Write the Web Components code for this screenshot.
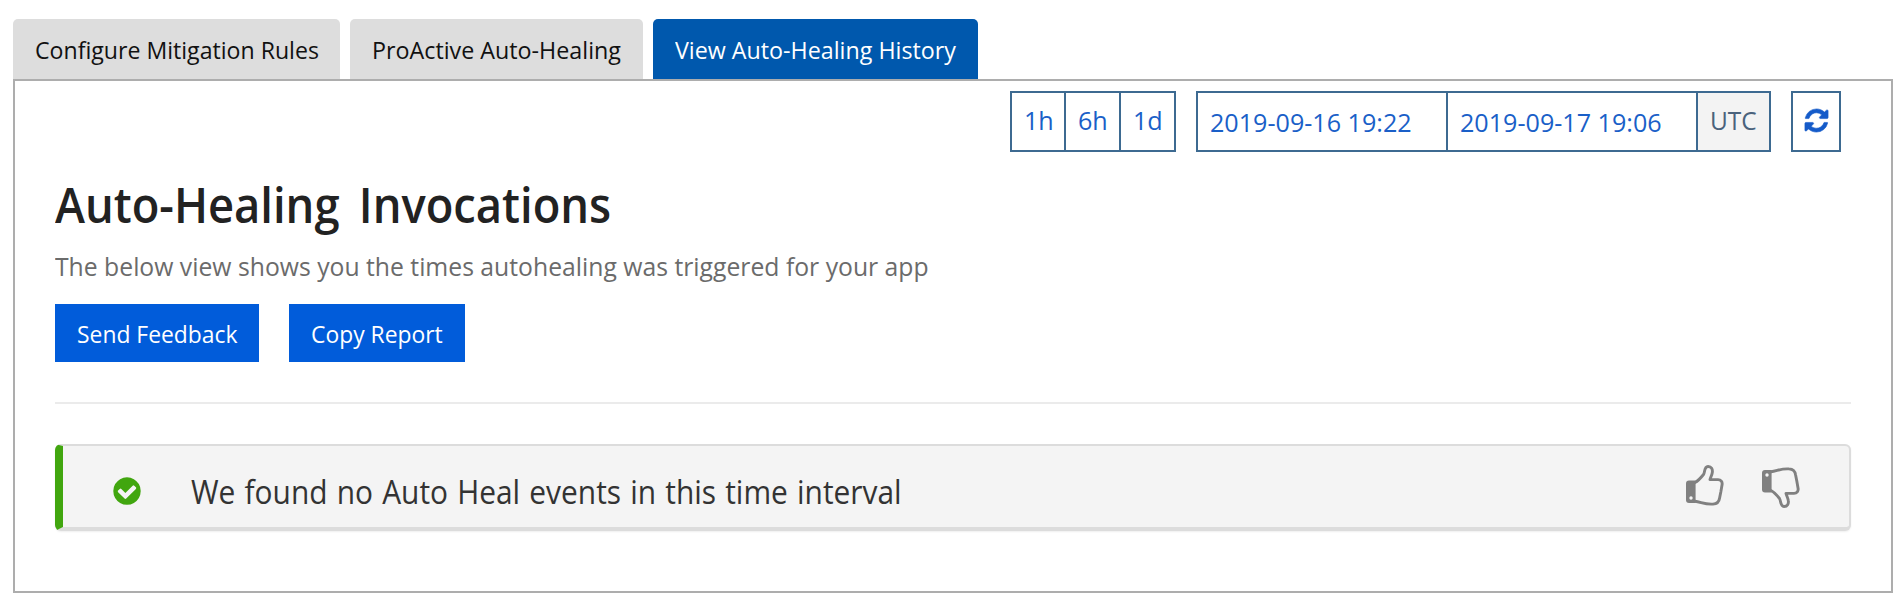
<!DOCTYPE html>
<html lang="en">
<head>
<meta charset="utf-8">
<title>Auto-Healing History</title>
<style>
body{margin:0;background:#fff;font-family:"Open Sans","Noto Sans",sans-serif}
</style>
</head>
<body>
<healing-page></healing-page>
<script>
function define(name, html) {
  const t = document.createElement('template');
  t.innerHTML = html;
  customElements.define(name, class extends HTMLElement {
    constructor() {
      super();
      this.attachShadow({mode: 'open'}).appendChild(t.content.cloneNode(true));
    }
  });
}
define('nav-tab', `<style>
:host{display:flex;box-sizing:border-box;width:var(--w);height:60px;padding:2px 0 0 22px;align-items:center;border-radius:5px 5px 0 0;background:#ddd;color:#111;font-size:24px;line-height:32px;white-space:nowrap}
:host([active]){background:#0058ad;color:#fff}
span{transform:scaleX(var(--sx,1));transform-origin:0 50%}
</style><span><slot></slot></span>`);
define('range-cell', `<style>
:host{display:flex;box-sizing:border-box;width:var(--w);height:61px;align-items:center;padding-left:var(--pl,12px);border:2px solid #3d6a91;margin-left:-2px;color:#1a5fc8;font-size:25.5px;line-height:34px;white-space:nowrap}
:host([muted]){background:#f3f3f3;color:#4a627c}
:host([first]){margin-left:0}
span{margin-top:var(--dy,-4px);transform:scaleX(var(--sx,.985));transform-origin:0 50%}
</style><span><slot></slot></span>`);
define('action-button', `<style>
:host{display:flex;box-sizing:border-box;width:var(--w);height:58px;align-items:center;padding-left:22px;background:#015cda;color:#fff;font-size:23.5px;line-height:32px;white-space:nowrap}
span{margin-top:2px;transform:scaleX(var(--sx,.973));transform-origin:0 50%}
</style><span><slot></slot></span>`);
define('refresh-icon', `<style>:host{display:block;width:27px;height:27px}svg{display:block}</style>
<svg width="27" height="27" viewBox="0 0 1792 1792" fill="#155bc9" stroke="#155bc9" stroke-width="40"><path d="M1639 1056q0 5-1 7-64 268-268 434.5t-478 166.5q-146 0-282.5-55t-243.5-157l-129 129q-19 19-45 19t-45-19-19-45v-448q0-26 19-45t45-19h448q26 0 45 19t19 45-19 45l-137 137q71 66 161 102t187 36q134 0 250-65t186-179q11-17 53-117 8-23 30-23h192q13 0 22.5 9.5t9.5 22.5zm25-800v448q0 26-19 45t-45 19h-448q-26 0-45-19t-19-45 19-45l138-138q-148-137-349-137-134 0-250 65t-186 179q-11 17-53 117-8 23-30 23h-199q-13 0-22.5-9.5t-9.5-22.5v-7q65-268 270-434.5t480-166.5q146 0 284 55.5t245 156.5l130-129q19-19 45-19t45 19 19 45z"/></svg>`);
define('check-icon', `<style>:host{display:block}svg{display:block}</style>
<svg width="32" height="32" viewBox="0 0 1792 1792"><circle cx="896" cy="896" r="600" fill="#f4f4f4"/><path fill="#41a60f" d="M1412 734q0-28-18-46l-91-90q-19-19-45-19t-45 19l-408 407-226-226q-19-19-45-19t-45 19l-91 90q-18 18-18 46 0 27 18 45l362 362q19 19 45 19 27 0 46-19l543-543q18-18 18-45zm252 162q0 209-103 385.5t-279.5 279.5-385.5 103-385.5-103-279.5-279.5-103-385.5 103-385.5 279.5-279.5 385.5-103 385.5 103 279.5 279.5 103 385.5z"/></svg>`);
define('thumb-icon', `<style>:host{display:block}svg{display:block}:host([down]) svg{transform:scaleY(-1)}</style>
<svg width="38" height="41" viewBox="0 0 38 41" fill="none" stroke="#808080" stroke-width="2.9" stroke-linejoin="round" stroke-linecap="round"><path d="M9 17.5C12 16 15.500 12 17.500 9.500C19 7.500 18 1.600 22 1.500C25.500 1.400 26.800 4.500 26.300 7.500C26 10 24.500 12.500 24 14.600L32 14.600C35 14.600 36.500 17 36.100 19.500L34.800 27L33.600 33C33 37.500 31 38.900 27 39.100C19 39.700 15 37 9 36.300"/><path fill="#808080" stroke="none" d="M3 15.500H9.600V38H3Q0 38 0 35V18.500Q0 15.500 3 15.500Z"/><circle cx="5" cy="33" r="1.700" fill="#f4f4f4" stroke="none"/></svg>`);
define('result-alert', `<style>
:host{display:flex;box-sizing:border-box;height:87px;border:2px solid #dcdcdc;border-left:8px solid #41a60f;border-bottom-width:4px;border-radius:6px;background:#f4f4f4;box-shadow:0 1px 2px #0001;padding-left:47.500px;align-items:flex-start}
check-icon{margin-top:29px}
p{margin:24px auto 0 48.500px;font-size:32px;line-height:44px;color:#333;white-space:nowrap;word-spacing:1.5px;transform:scaleX(.934);transform-origin:0 50%}
thumb-icon{margin:19px 38.500px 0 0}
thumb-icon[down]{margin-top:21px;margin-right:49px}
</style><check-icon></check-icon><p><slot></slot></p><thumb-icon></thumb-icon><thumb-icon down></thumb-icon>`);
define('healing-page', `<style>
:host{display:block;box-sizing:border-box;padding:19px 11px 0 13px}
.tabs{display:flex;gap:10px}
main{box-sizing:border-box;height:514px;border:2px solid #adadad;padding:10px 40px 0}
.time{display:flex;padding-right:10px;justify-content:flex-end}
.g{display:flex;margin-right:20px}
h1,.sub{width:max-content;white-space:nowrap;transform-origin:0 50%}
h1{margin:20px 0 0;font-size:48px;line-height:66px;font-weight:600;color:#222;word-spacing:8px;transform:scaleX(.944)}
.sub{margin:10px 0 0;font-size:25.5px;line-height:36px;color:#6b6b6b;transform:scaleX(.97)}
.acts{display:flex;gap:30px;margin-top:20px}
hr{border:0;height:2px;background:#ebebeb;margin:40px 0}
</style>
<div class="tabs"><nav-tab style="--w:327px;--sx:.963">Configure Mitigation Rules</nav-tab><nav-tab style="--w:293px;--sx:.97">ProActive Auto-Healing</nav-tab><nav-tab active style="--w:325px;--sx:.969">View Auto-Healing History</nav-tab></div>
<main>
<div class="time"><div class="g"><range-cell first style="--w:56px">1h</range-cell><range-cell style="--w:57px">6h</range-cell><range-cell style="--w:57px">1d</range-cell></div>
<div class="g"><range-cell first style="--w:252px;--dy:0px">2019-09-16 19:22</range-cell><range-cell style="--w:252px;--dy:0px">2019-09-17 19:06</range-cell><range-cell muted style="--w:75px;--sx:.96">UTC</range-cell></div>
<range-cell first style="--w:50px;--pl:9.500px;--dy:-3px;--sx:1"><refresh-icon></refresh-icon></range-cell></div>
<h1>Auto-Healing Invocations</h1>
<p class="sub">The below view shows you the times autohealing was triggered for your app</p>
<div class="acts"><action-button style="--w:204px">Send Feedback</action-button><action-button style="--w:176px">Copy Report</action-button></div>
<hr>
<result-alert>We found no Auto Heal events in this time interval</result-alert>
</main>`);
</script>
</body>
</html>
